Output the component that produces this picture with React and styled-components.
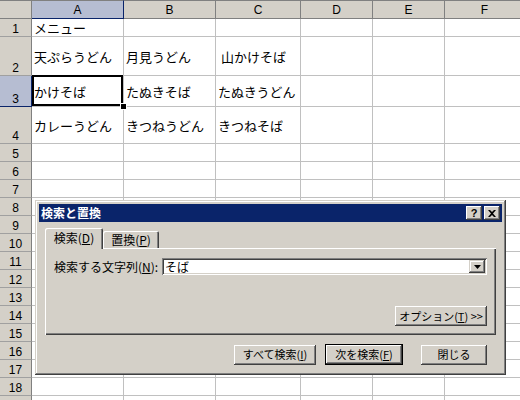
import React from 'react'
import styled, { createGlobalStyle } from 'styled-components'

const FACE = '#d4d0c8'
const NAVY = '#0a246a'
const JP = `"Noto Sans CJK JP", "Liberation Sans", sans-serif`
const LATIN = `"Liberation Sans", Arial, sans-serif`

const GlobalStyle = createGlobalStyle`
    html, body {
        margin: 0;
        padding: 0;
        background: #fff;
        overflow: hidden;
    }
    body {
        font-family: ${JP};
    }
`

const Screen = styled.div`
    position: relative;
    width: 520px;
    height: 400px;
    overflow: hidden;
    background: #fff;
`

const Sheet = styled.div`
    display: grid;
    grid-template-columns: 32px 92px 92px 85px 72px 72px 80px;
    grid-template-rows: 19px 18px 39px 31px 37px repeat(15, 18px);
`

const Corner = styled.div`
    box-sizing: border-box;
    background: ${FACE};
    border-top: 1px solid #808080;
    border-right: 1px solid #808080;
    border-bottom: 1px solid #808080;
`

const ColHead = styled.div`
    box-sizing: border-box;
    display: flex;
    align-items: flex-end;
    justify-content: center;
    padding-bottom: 2px;
    background: ${p => p.$selected ? '#b6bdd2' : FACE};
    border-top: 1px solid #808080;
    border-right: 1px solid ${p => p.$selected ? NAVY : '#808080'};
    border-bottom: 1px solid ${p => p.$selected ? NAVY : '#808080'};
    font: 12px/12px ${LATIN};
    color: #000;
`

const RowHead = styled.div`
    box-sizing: border-box;
    display: flex;
    align-items: flex-end;
    justify-content: center;
    padding-bottom: 1px;
    background: ${p => p.$selected ? '#b6bdd2' : FACE};
    border-right: 1px solid ${p => p.$selected ? NAVY : '#808080'};
    border-bottom: 1px solid ${p => p.$selected ? NAVY : '#a0a0a0'};
    font: 12px/12px ${LATIN};
    color: #000;
`

const Cell = styled.div`
    position: relative;
    box-sizing: border-box;
    display: flex;
    align-items: center;
    padding-left: 2px;
    border-right: 1px solid #c0c0c0;
    border-bottom: 1px solid #c0c0c0;
    font: 13px/15px ${JP};
    color: #000;
    white-space: nowrap;

    ${p => p.$active && `
        &::after {
            content: '';
            position: absolute;
            left: 0;
            top: -1px;
            right: 0;
            bottom: 0;
            border: 2px solid #000;
        }
        &::before {
            content: '';
            position: absolute;
            right: -3px;
            bottom: -3px;
            width: 5px;
            height: 5px;
            background: #000;
            outline: 1px solid #fff;
            z-index: 1;
        }
    `}
`

/* --- dialog --- */

const Dialog = styled.div`
    position: absolute;
    left: 35px;
    top: 200px;
    width: 471px;
    box-sizing: border-box;
    padding: 4px 4px 10px;
    display: flex;
    flex-direction: column;
    background: ${FACE};
    box-shadow: inset -1px -1px #404040, inset 1px 1px ${FACE},
        inset -2px -2px #808080, inset 2px 2px #fff;
    font: 12px ${JP};
    color: #000;
`

const TitleBar = styled.div`
    display: flex;
    align-items: center;
    height: 18px;
    padding: 0 2px 0 2px;
    background: ${NAVY};
`

const TitleText = styled.span`
    flex: 1;
    color: #fff;
    font: bold 12px/18px ${JP};
`

const CaptionButton = styled.div`
    box-sizing: border-box;
    display: flex;
    align-items: center;
    justify-content: center;
    width: 16px;
    height: 14px;
    margin-left: 2px;
    background: ${FACE};
    box-shadow: inset -1px -1px #404040, inset 1px 1px #fff,
        inset -2px -2px #808080;
    font: bold 11px/14px ${LATIN};
`

const DialogBody = styled.div`
    display: flex;
    flex-direction: column;
    padding: 6px 6px 0;
`

const TabStrip = styled.div`
    display: flex;
    align-items: flex-end;
    height: 20px;
`

const Tab = styled.div`
    position: relative;
    z-index: ${p => p.$active ? 1 : 0};
    box-sizing: border-box;
    display: flex;
    align-items: center;
    justify-content: center;
    width: ${p => p.$width}px;
    height: ${p => p.$active ? 21 : 17}px;
    margin-bottom: ${p => p.$active ? -1 : 0}px;
    padding-bottom: ${p => p.$active ? 2 : 0}px;
    background: ${FACE};
    border-radius: 2px 2px 0 0;
    box-shadow: inset 1px 1px #fff, inset -1px 0 #404040, inset -2px 0 #808080;
    font: 12px/14px ${JP};
`

const Panel = styled.div`
    box-sizing: border-box;
    display: flex;
    flex-direction: column;
    height: 87px;
    padding: 10px 9px 9px;
    box-shadow: inset 1px 1px #fff, inset -1px -1px #404040,
        inset -2px -2px #808080;
`

const FieldRow = styled.div`
    display: flex;
    align-items: center;
    height: 17px;
`

const FieldLabel = styled.span`
    flex: 0 0 108px;
    font: 12px/14px ${JP};
    white-space: nowrap;
`

const Combo = styled.div`
    box-sizing: border-box;
    flex: 1;
    display: flex;
    align-items: center;
    height: 17px;
    padding: 2px;
    background: #fff;
    box-shadow: inset 1px 1px #808080, inset -1px -1px #fff,
        inset 2px 2px #404040, inset -2px -2px ${FACE};
`

const ComboText = styled.span`
    flex: 1;
    padding-left: 1px;
    font: 12px/13px ${JP};
`

const DropButton = styled.div`
    box-sizing: border-box;
    display: flex;
    align-items: center;
    justify-content: center;
    width: 16px;
    height: 13px;
    background: ${FACE};
    box-shadow: inset -1px -1px #404040, inset 1px 1px ${FACE},
        inset -2px -2px #808080, inset 2px 2px #fff;
`

const OptionRow = styled.div`
    display: flex;
    justify-content: flex-end;
    margin-top: auto;
`

const ButtonRow = styled.div`
    display: flex;
    justify-content: flex-end;
    align-items: center;
    gap: 9px;
    height: 21px;
    margin-top: 9px;
    padding-right: 9px;
`

const Button = styled.div`
    box-sizing: border-box;
    display: flex;
    align-items: center;
    justify-content: center;
    width: ${p => p.$width}px;
    height: ${p => p.$default ? 21 : 20}px;
    margin-left: ${p => p.$gapLeft || 0}px;
    background: ${FACE};
    border: ${p => p.$default ? '1px solid #000' : 'none'};
    box-shadow: inset -1px -1px #404040, inset 1px 1px #fff,
        inset -2px -2px #808080, inset 2px 2px ${FACE};
    font: 11px/13px ${JP};
    white-space: nowrap;

    u {
        text-underline-offset: 1px;
    }
`

const CloseGlyph = () => (
    <svg width="8" height="7" viewBox="0 0 8 7">
        <path d="M0 0h2l2 2 2-2h2L5 3.5 8 7H6L4 5 2 7H0l3-3.5z" fill="#000" />
    </svg>
)

const DownArrow = () => (
    <svg width="7" height="4" viewBox="0 0 7 4">
        <polygon points="0,0 7,0 3.5,4" fill="#000" />
    </svg>
)

const COLS = ['A', 'B', 'C', 'D', 'E', 'F']
const DATA = {
    1: ['メニュー'],
    2: ['天ぷらうどん', '月見うどん', '\u00a0山かけそば'],
    3: ['かけそば', 'たぬきそば', 'たぬきうどん'],
    4: ['カレーうどん', 'きつねうどん', 'きつねそば'],
}
const ROW_COUNT = 19
const ACTIVE = { row: 3, col: 0 }

export default function App() {
    const rows = Array.from({ length: ROW_COUNT }, (_, i) => i + 1)

    return (
        <Screen>
            <GlobalStyle />
            <Sheet>
                <Corner />
                {COLS.map((c, i) => (
                    <ColHead key={c} $selected={i === ACTIVE.col}>{c}</ColHead>
                ))}
                {rows.map((r) => (
                    <React.Fragment key={r}>
                        <RowHead $selected={r === ACTIVE.row}>{r}</RowHead>
                        {COLS.map((c, i) => (
                            <Cell
                                key={c}
                                $active={r === ACTIVE.row && i === ACTIVE.col}>
                                {DATA[r]?.[i] ?? ''}
                            </Cell>
                        ))}
                    </React.Fragment>
                ))}
            </Sheet>

            <Dialog>
                <TitleBar>
                    <TitleText>検索と置換</TitleText>
                    <CaptionButton>?</CaptionButton>
                    <CaptionButton><CloseGlyph /></CaptionButton>
                </TitleBar>
                <DialogBody>
                    <TabStrip>
                        <Tab $active $width={58}>検索(<u>D</u>)</Tab>
                        <Tab $width={56}>置換(<u>P</u>)</Tab>
                    </TabStrip>
                    <Panel>
                        <FieldRow>
                            <FieldLabel>検索する文字列(<u>N</u>):</FieldLabel>
                            <Combo>
                                <ComboText>そば</ComboText>
                                <DropButton><DownArrow /></DropButton>
                            </Combo>
                        </FieldRow>
                        <OptionRow>
                            <Button $width={92}>オプション(<u>T</u>) &gt;&gt;</Button>
                        </OptionRow>
                    </Panel>
                    <ButtonRow>
                        <Button $width={82}>すべて検索(<u>I</u>)</Button>
                        <Button $default $width={78}>次を検索(<u>F</u>)</Button>
                        <Button $width={66} $gapLeft={9}>閉じる</Button>
                    </ButtonRow>
                </DialogBody>
            </Dialog>
        </Screen>
    )
}
